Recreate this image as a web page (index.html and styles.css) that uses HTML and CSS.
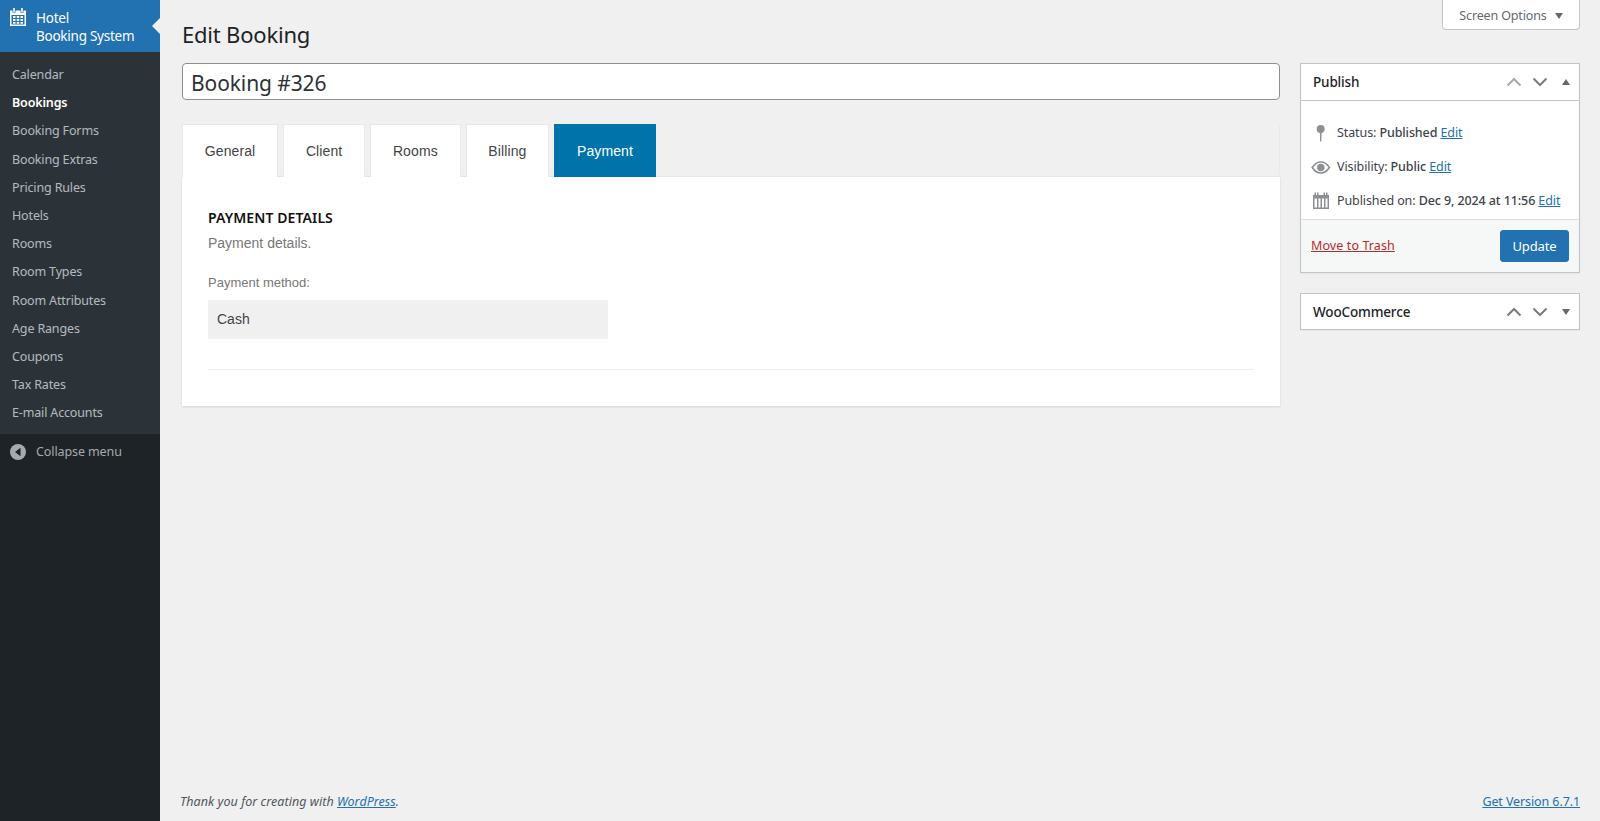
FILE: index.html
```html
<!DOCTYPE html>
<html lang="en">
<head>
    <meta charset="UTF-8">
    <title>Edit Booking</title>
    <link rel="stylesheet" href="styles.css">
</head>
<body>
    <div class="wrap">
        <aside class="sidebar">
            <div class="menu-head">
                <svg class="menu-icon" viewBox="0 0 16 18" width="16" height="18">
                    <path fill="#fff" fill-rule="evenodd" d="M0 2.500h2.500V4.800h3V2.500h5V4.800h3V2.500H16V18H0zM1.500 7v9.500h13V7z"/>
                    <path fill="#fff" d="M3.200 0h1.600v4.200H3.200zM11.200 0h1.600v4.200h-1.600z"/>
                    <path fill="#fff" d="M3 8h2.500v2H3zM6.750 8h2.500v2h-2.500zM10.500 8H13v2h-2.500zM3 11h2.500v2H3zM6.750 11h2.500v2h-2.500zM10.500 11H13v2h-2.500zM3 14h2.500v1.800H3zM6.750 14h2.500v1.800h-2.500zM10.500 14H13v1.800h-2.500z"/>
                </svg>
                <span class="menu-title">Hotel<br>Booking System</span>
            </div>
            <ul class="submenu">
                <li>Calendar</li>
                <li class="current">Bookings</li>
                <li>Booking Forms</li>
                <li>Booking Extras</li>
                <li>Pricing Rules</li>
                <li>Hotels</li>
                <li>Rooms</li>
                <li>Room Types</li>
                <li>Room Attributes</li>
                <li>Age Ranges</li>
                <li>Coupons</li>
                <li>Tax Rates</li>
                <li>E-mail Accounts</li>
            </ul>
            <div class="collapse">
                <svg viewBox="0 0 16 16" width="16" height="16">
                    <circle cx="8" cy="8" r="8" fill="#a7aaad"/>
                    <path fill="#1d2327" d="M10.500 3.800v8.400L5 8z"/>
                </svg>
                <span>Collapse menu</span>
            </div>
        </aside>

        <main class="content">
            <button class="screen-options">Screen Options <i class="arrow-down"></i></button>
            <h1>Edit Booking</h1>
            <div class="columns">
                <div class="main-col">
                    <input class="title-input" type="text" value="Booking #326">
                    <div class="tabs">
                        <a class="tab">General</a>
                        <a class="tab">Client</a>
                        <a class="tab">Rooms</a>
                        <a class="tab">Billing</a>
                        <a class="tab active">Payment</a>
                    </div>
                    <section class="panel">
                        <h3>PAYMENT DETAILS</h3>
                        <p class="desc">Payment details.</p>
                        <label class="field-label">Payment method:</label>
                        <div class="field-value">Cash</div>
                        <hr>
                    </section>
                </div>

                <div class="side-col">
                    <div class="box">
                        <div class="box-head">
                            <span class="box-title">Publish</span>
                            <svg class="handle faded" viewBox="0 0 20 20" width="20" height="20"><path d="M3.500 13.500L10 7l6.500 6.500" /></svg>
                            <svg class="handle" viewBox="0 0 20 20" width="20" height="20"><path d="M3.500 6.500L10 13l6.500-6.500" /></svg>
                            <i class="arrow-up"></i>
                        </div>
                        <div class="box-body">
                            <div class="pub-row">
                                <svg class="pub-icon" viewBox="0 0 20 20" width="20" height="20">
                                    <circle cx="9.700" cy="6" r="4" fill="#8c8f94"/>
                                    <path fill="#8c8f94" d="M8.800 8h1.800l-.3 10.500h-1.200z"/>
                                </svg>
                                <span>Status: <b>Published</b> <a href="#">Edit</a></span>
                            </div>
                            <div class="pub-row">
                                <svg class="pub-icon" viewBox="0 0 20 20" width="20" height="20">
                                    <path fill="none" stroke="#8c8f94" stroke-width="1.500" d="M1.200 10.500C3.700 6.600 6.800 5 9.800 5s6.100 1.600 8.600 5.500c-2.500 3.900-5.600 5.500-8.600 5.500s-6.100-1.600-8.600-5.500z"/>
                                    <circle cx="9.800" cy="10.500" r="3.700" fill="#8c8f94"/>
                                </svg>
                                <span>Visibility: <b>Public</b> <a href="#">Edit</a></span>
                            </div>
                            <div class="pub-row">
                                <svg class="pub-icon" viewBox="0 0 20 20" width="20" height="20">
                                    <path fill="#8c8f94" fill-rule="evenodd" d="M3.500 1.500H5v2.500h1V1.500h1.500v2.500h5V1.500H14v2.500h1V1.500h1.500v2.500H18v14H2V4h1.500zM3.500 7.500V16.500h2.500V7.500zM7.500 7.500V16.500h2V7.500zM11 7.500V16.500h2V7.500zM14.500 7.500V16.500h2V7.500z"/>
                                </svg>
                                <span>Published on: <b>Dec 9, 2024 at 11:56</b> <a href="#">Edit</a></span>
                            </div>
                        </div>
                        <div class="box-actions">
                            <a class="trash" href="#">Move to Trash</a>
                            <button class="update">Update</button>
                        </div>
                    </div>

                    <div class="box">
                        <div class="box-head closed">
                            <span class="box-title">WooCommerce</span>
                            <svg class="handle" viewBox="0 0 20 20" width="20" height="20"><path d="M3.500 13.500L10 7l6.500 6.500" /></svg>
                            <svg class="handle" viewBox="0 0 20 20" width="20" height="20"><path d="M3.500 6.500L10 13l6.500-6.500" /></svg>
                            <i class="arrow-down box-arrow"></i>
                        </div>
                    </div>
                </div>
            </div>
            <footer class="footer">
                <em>Thank you for creating with <a href="#">WordPress</a>.</em>
                <a href="#">Get Version 6.7.1</a>
            </footer>
        </main>
    </div>
</body>
</html>
```

FILE: styles.css
```css
* {
    box-sizing: border-box;
}

html, body {
    height: 100%;
}

body {
    margin: 0;
    background: #f0f0f0;
    color: #3c434a;
    font-family: "Noto Sans", Arial, sans-serif;
    font-size: 12.5px;
    letter-spacing: -0.1px;
    line-height: 1.456;
    overflow: hidden;
}

a {
    color: #2271b1;
}

.wrap {
    display: flex;
    height: 821px;
}

/* sidebar */
.sidebar {
    width: 160px;
    flex-shrink: 0;
    background: #1d2327;
    color: #f0f0f1;
}

.menu-head {
    position: relative;
    height: 52px;
    display: flex;
    background: #2271b1;
    color: #fff;
    font-size: 13.5px;
    letter-spacing: -0.25px;
    line-height: 18px;
    padding: 9px 8px 0 10px;
}

.menu-head::after {
    content: '';
    position: absolute;
    right: 0;
    top: 18px;
    border: 8px solid transparent;
    border-right-color: #f0f0f0;
}

.menu-icon {
    flex-shrink: 0;
    margin: -1px 10px 0 0;
}

.submenu {
    list-style: none;
    margin: 0;
    padding: 9px 0 0;
    background: #2c3338;
    color: rgba(240, 246, 252, 0.7);
    height: 382px;
    letter-spacing: -0.15px;
}

.submenu li {
    padding: 5px 12px;
    height: 28.2px;
    white-space: nowrap;
}

.submenu .current {
    color: #fff;
    font-weight: 600;
}

.collapse {
    display: flex;
    align-items: center;
    gap: 10px;
    padding: 7px 10px;
    height: 36px;
    color: #a7aaad;
}

/* main area */
.content {
    position: relative;
    flex: 1;
    display: flex;
    flex-direction: column;
    padding: 0 20px 0 22px;
}

.screen-options {
    position: absolute;
    top: 0;
    right: 20px;
    width: 138px;
    height: 30px;
    background: #fff;
    border: 1px solid #c3c4c7;
    border-top: none;
    border-radius: 0 0 4px 4px;
    color: #646970;
    font: 12.5px "Noto Sans", Arial, sans-serif;
    letter-spacing: -0.15px;
    padding: 2px 0 0;
}

.arrow-down, .arrow-up {
    display: inline-block;
    width: 0;
    height: 0;
    border-left: 4.500px solid transparent;
    border-right: 4.500px solid transparent;
}

.arrow-down {
    border-top: 6px solid #646970;
    margin-left: 5px;
    vertical-align: 1px;
}

.arrow-up {
    border-bottom: 6px solid #646970;
}

h1 {
    margin: 0;
    padding: 18px 0 0;
    height: 63px;
    font-size: 22px;
    font-weight: 400;
    letter-spacing: -0.2px;
    line-height: 32px;
    color: #1d2327;
}

.columns {
    display: flex;
    gap: 20px;
    flex: 1;
}

.main-col {
    width: 1098px;
}

.side-col {
    width: 280px;
}

.title-input {
    display: block;
    width: 100%;
    height: 37px;
    padding: 4px 8px 2px;
    border: 1px solid #8c8f94;
    border-radius: 4px;
    background: #fff;
    color: #2c3338;
    font: 21px "Noto Sans", Arial, sans-serif;
    letter-spacing: -0.1px;
}

/* tabs */
.tabs {
    position: relative;
    z-index: 1;
    display: flex;
    gap: 5px;
    margin: 24px 0 -1px;
    height: 53px;
    border-right: 1px solid #eaeaea;
    font-family: "Liberation Sans", Arial, sans-serif;
    font-size: 14px;
    letter-spacing: 0.1px;
}

.tab {
    display: flex;
    align-items: center;
    justify-content: center;
    height: 53px;
    padding: 0 21.800px;
    background: #fff;
    border: 1px solid #e8e8e8;
    border-bottom: none;
    color: #444;
}

.tab.active {
    background: #0073aa;
    border-color: #0073aa;
    color: #fff;
}

.panel {
    height: 230px;
    padding: 32px 26px 0;
    background: #fff;
    border-top: 1px solid #e5e5e5;
    box-shadow: 0 1px 2px rgba(0, 0, 0, 0.12);
    font-family: "Liberation Sans", Arial, sans-serif;
    letter-spacing: 0;
}

.panel h3 {
    margin: 0;
    font: 600 14px/18px "Noto Sans", Arial, sans-serif;
    letter-spacing: 0.1px;
    color: #111;
}

.desc {
    margin: 6px 0 0;
    font-size: 14px;
    line-height: 20px;
    color: #777;
}

.field-label {
    display: block;
    margin-top: 20px;
    color: #777;
    font-size: 13px;
    line-height: 20px;
}

.field-value {
    width: 400px;
    height: 39px;
    margin-top: 7px;
    padding: 0 9px;
    background: #f0f0f0;
    color: #444;
    font-size: 14px;
    line-height: 39px;
}

.panel hr {
    margin: 30px 0 0;
    border: none;
    border-top: 1px solid #eee;
}

/* side boxes */
.box {
    margin-bottom: 20px;
    background: #fff;
    border: 1px solid #c3c4c7;
    box-shadow: 0 1px 1px rgba(0, 0, 0, 0.04);
}

.box-head {
    display: flex;
    align-items: center;
    height: 36px;
    padding: 0 9px 0 12px;
}

.box-head.closed {
    height: 35px;
}

.box-title {
    flex: 1;
    padding-top: 2px;
    font-size: 13.500px;
    font-weight: 500;
    letter-spacing: -0.15px;
    color: #1d2327;
}

.handle {
    margin-left: 6px;
    fill: none;
    stroke: #787c82;
    stroke-width: 2;
}

.handle.faded {
    stroke: #a7aaad;
}

.box-head .arrow-up, .box-arrow {
    margin: 0 0 0 12px;
}

.box-body {
    border-top: 1px solid #c3c4c7;
    padding: 15px 0 1px;
}

.pub-row {
    display: flex;
    align-items: center;
    height: 34px;
    padding-left: 10px;
}

.pub-icon {
    margin-right: 6px;
}

.pub-row b {
    font-weight: 500;
}

.box-actions {
    display: flex;
    align-items: center;
    justify-content: space-between;
    height: 53px;
    padding: 0 10px;
    background: #f6f7f7;
    border-top: 1px solid #dcdcde;
}

.trash {
    color: #b32d2e;
    letter-spacing: 0.1px;
}

.update {
    width: 69px;
    height: 32px;
    padding: 0;
    background: #2271b1;
    border: 1px solid #2271b1;
    border-radius: 3px;
    color: #fff;
    font: 13px "Noto Sans", Arial, sans-serif;
    letter-spacing: -0.1px;
}

.footer {
    display: flex;
    justify-content: space-between;
    height: 37px;
    margin-left: -2px;
    padding-top: 9px;
    color: #50575e;
}

.footer em {
    letter-spacing: 0.05px;
}
```
